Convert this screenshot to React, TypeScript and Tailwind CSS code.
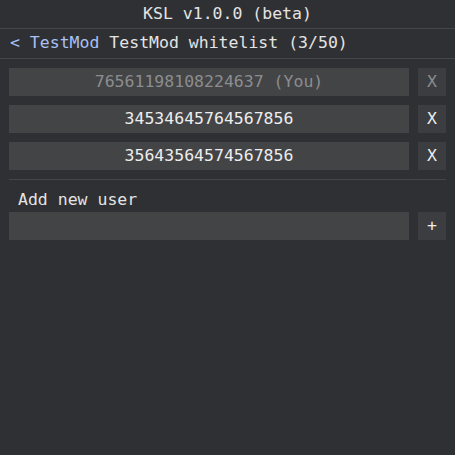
import React from "react";

const users = [
  { id: "76561198108224637", you: true },
  { id: "34534645764567856", you: false },
  { id: "35643564574567856", you: false },
];

const App = () => {
  return (
    <div className="w-[455px] h-[455px] bg-[#2f3033] text-[#e4e4e4] text-[16.5px] font-['DejaVu_Sans_Mono',monospace] overflow-hidden">
      {/* Title bar */}
      <div className="h-[29px] flex items-center justify-center border-b border-[#45464a]">
        KSL v1.0.0 (beta)
      </div>

      {/* Breadcrumb */}
      <div className="h-[30px] flex items-center px-[10px] border-b border-[#45464a] whitespace-pre">
        <span className="text-[#a9c1f3]">&lt; TestMod</span>
        <span> TestMod whitelist (3/50)</span>
      </div>

      <div className="px-[9px] pt-[9px] flex flex-col">
        <div className="flex flex-col gap-[9px]">
          {users.map((u) => (
            <div key={u.id} className="flex gap-[9px] h-[28px]">
              <div
                className={`flex-1 bg-[#434446] flex items-center justify-center ${
                  u.you ? "text-[#8c8d8f]" : "text-[#ededed]"
                }`}
              >
                {u.id}
                {u.you ? " (You)" : ""}
              </div>
              <button
                className={`w-[28px] bg-[#3c3d40] flex items-center justify-center ${
                  u.you ? "text-[#8c8d8f]" : "text-[#ededed]"
                }`}
              >
                X
              </button>
            </div>
          ))}
        </div>

        {/* Separator */}
        <div className="mt-[9px] border-t border-[#45464a]" />

        <div className="pl-[9px] pt-[10px] h-[32px] leading-[20px]">Add new user</div>

        <div className="flex gap-[9px] h-[28px]">
          <input className="flex-1 bg-[#434446] outline-none px-2 text-[#ededed]" />
          <button className="w-[28px] bg-[#3c3d40] flex items-center justify-center text-[#ededed]">
            +
          </button>
        </div>
      </div>
    </div>
  );
};

export default App;
